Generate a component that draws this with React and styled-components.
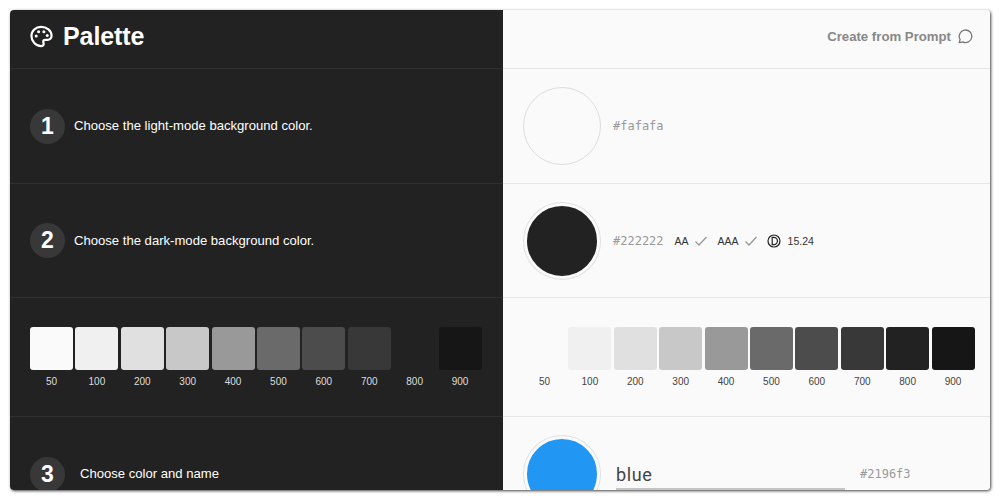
import React from "react";
import styled, { createGlobalStyle } from "styled-components";

const Global = createGlobalStyle`
  html, body { margin: 0; padding: 0; background: #fff; }
  body { font-family: "Liberation Sans", Arial, sans-serif; }
`;

const Page = styled.div`
  width: 1000px;
  height: 500px;
  padding: 10px;
  box-sizing: border-box;
  overflow: hidden;
`;

const Frame = styled.div`
  width: 980px;
  height: 480px;
  display: grid;
  grid-template-columns: 493px 487px;
  border-radius: 4px;
  overflow: hidden;
  box-shadow: 1px 1px 3px rgba(0, 0, 0, 0.75);
`;

const Panel = styled.section`
  display: grid;
  grid-template-columns: minmax(0, 1fr);
  grid-template-rows: 59px 115px 114px 119px 114px;
  background: ${(p) => (p.$dark ? "#222222" : "#fafafa")};
  color: ${(p) => (p.$dark ? "#ffffff" : "#222222")};
  --line: ${(p) => (p.$dark ? "#303030" : "#e6e6e6")};
`;

const Row = styled.div`
  display: flex;
  align-items: center;
  padding: 0 ${(p) => (p.$tight ? "15px" : "20px")} 0 20px;
  box-sizing: border-box;
  border-bottom: 1px solid var(--line);
  &:last-child { border-bottom: 0; }
`;

const HeaderRow = styled(Row)`
  justify-content: ${(p) => (p.$end ? "flex-end" : "flex-start")};
  gap: ${(p) => (p.$end ? "7px" : "10px")};
  padding-right: ${(p) => (p.$end ? "16px" : "20px")};
  padding-bottom: 6px;
`;

const Title = styled.h1`
  margin: 0;
  font-size: 25px;
  font-weight: 700;
  line-height: 30px;
  letter-spacing: -0.1px;
`;

const PromptLink = styled.span`
  font-size: 13.2px;
  font-weight: 700;
  color: #888888;
`;

const StepBadge = styled.span`
  width: 35px;
  height: 35px;
  border-radius: 50%;
  background: #383838;
  display: flex;
  align-items: center;
  justify-content: center;
  font-size: 23px;
  font-weight: 700;
  color: #fff;
  flex: none;
`;

const StepText = styled.span`
  font-size: 13.1px;
  margin-left: ${(p) => p.$gap || 9}px;
  margin-bottom: 1px;
  color: #fff;
`;

const Circle = styled.div`
  width: 78px;
  height: 78px;
  box-sizing: border-box;
  border-radius: 50%;
  flex: none;
  background: ${(p) => p.$color};
  border: ${(p) => (p.$ringed ? "3px solid #fafafa" : "1px solid #dddddd")};
  box-shadow: ${(p) => (p.$ringed ? "0 0 0 1px #e0e0e0" : "none")};
  ${(p) => p.$ringed && "width: 76px; height: 76px; margin: 0 1px;"}
`;

const Hex = styled.span`
  font-family: "DejaVu Sans Mono", monospace;
  font-size: 12px;
  color: #999999;
  margin-left: ${(p) => p.$gap ?? 12}px;
`;

const Grade = styled.span`
  font-size: 10.5px;
  color: #333;
  margin-left: ${(p) => p.$gap}px;
`;

const CheckIcon = styled.svg`
  width: 14px;
  height: 14px;
  margin-left: 5px;
  fill: none;
  stroke: #999999;
  stroke-width: 1.3;
`;

const ContrastIcon = styled.svg`
  width: 14px;
  height: 14px;
  margin-left: 9px;
  fill: none;
  stroke: #222;
  stroke-width: 1.2;
`;

const Swatches = styled.div`
  width: 100%;
  display: grid;
  grid-template-columns: repeat(10, 43px);
  column-gap: 2.4px;
`;

const SwatchCell = styled.div`
  display: flex;
  flex-direction: column;
  align-items: center;
  gap: 6px;
`;

const Swatch = styled.div`
  width: 43px;
  height: 43px;
  border-radius: 3px;
  background: ${(p) => p.$color};
`;

const SwatchLabel = styled.span`
  font-size: 10px;
  line-height: 12px;
  color: ${(p) => (p.$dark ? "#dddddd" : "#444444")};
`;

const NameField = styled.div`
  position: relative;
  width: 229px;
  height: 28px;
  margin-left: 15px;
  display: flex;
  align-items: center;
  font-family: Roboto, sans-serif;
  font-size: 18px;
  letter-spacing: 0.6px;
  color: #444444;
  flex: none;
`;

const Underline = styled.span`
  position: absolute;
  left: 0;
  right: 0;
  top: 28px;
  height: 2px;
  background: #c4c4c4;
`;

const greys = ["#fafafa", "#f0f0f0", "#e0e0e0", "#c8c8c8", "#999999", "#6a6a6a", "#4c4c4c", "#383838", "#222222", "#161616"];
const labels = [50, 100, 200, 300, 400, 500, 600, 700, 800, 900];

const PaletteIcon = () => (
  <svg width="23" height="23" viewBox="0 0 24 24" fill="none" stroke="#fff" strokeWidth="2.3" strokeLinecap="round" strokeLinejoin="round">
    <path d="M11.5 2C6 2 1.5 6 1.5 11.5 1.5 17 6 22 11.5 22c1.8 0 2.8-1 2.8-2.4 0-.8-.5-1.4-.5-2.1 0-1.2 1-2 2.2-2h2.2c2.4 0 4.3-1.8 4.3-4.2C22.5 6 17.5 2 11.5 2z" />
    <circle cx="6.5" cy="11.5" r="1.6" fill="#fff" stroke="none" />
    <circle cx="9" cy="7" r="1.6" fill="#fff" stroke="none" />
    <circle cx="14.5" cy="7" r="1.6" fill="#fff" stroke="none" />
    <circle cx="18" cy="11" r="1.6" fill="#fff" stroke="none" />
  </svg>
);

const BubbleIcon = () => (
  <svg width="16" height="16" viewBox="0 0 16 16" fill="none" stroke="#777" strokeWidth="1.3" strokeLinejoin="round">
    <path d="M1.2 14.6l.9-3.1A6.3 6.3 0 1 1 4.6 13.9c-1.1.5-2.2.7-3.4.7z" />
  </svg>
);

const Check = () => (
  <CheckIcon viewBox="0 0 14 14"><path d="M1.5 7.5l3.5 3.5 7.5-8" /></CheckIcon>
);

const Scale = ({ dark, colors }) => (
  <Swatches>
    {labels.map((l, i) => (
      <SwatchCell key={l}>
        <Swatch $color={colors[i]} />
        <SwatchLabel $dark={dark}>{l}</SwatchLabel>
      </SwatchCell>
    ))}
  </Swatches>
);

export default function App() {
  return (
    <Page>
      <Global />
      <Frame>
        <Panel $dark>
          <HeaderRow>
            <PaletteIcon />
            <Title>Palette</Title>
          </HeaderRow>
          <Row>
            <StepBadge>1</StepBadge>
            <StepText>Choose the light-mode background color.</StepText>
          </Row>
          <Row>
            <StepBadge>2</StepBadge>
            <StepText>Choose the dark-mode background color.</StepText>
          </Row>
          <Row>
            <Scale dark colors={greys} />
          </Row>
          <Row>
            <StepBadge>3</StepBadge>
            <StepText $gap={15}>Choose color and name</StepText>
          </Row>
        </Panel>
        <Panel>
          <HeaderRow $end>
            <PromptLink>Create from Prompt</PromptLink>
            <BubbleIcon />
          </HeaderRow>
          <Row>
            <Circle $color="#fafafa" />
            <Hex>#fafafa</Hex>
          </Row>
          <Row>
            <Circle $color="#222222" $ringed />
            <Hex>#222222</Hex>
            <Grade $gap={11}>AA</Grade>
            <Check />
            <Grade $gap={10}>AAA</Grade>
            <Check />
            <ContrastIcon viewBox="0 0 14 14">
              <circle cx="7" cy="7" r="6" />
              <path d="M5.2 3.4h1.6a3.6 3.6 0 0 1 0 7.2H5.2z" />
            </ContrastIcon>
            <Grade $gap={7}>15.24</Grade>
          </Row>
          <Row $tight>
            <Scale colors={greys} />
          </Row>
          <Row>
            <Circle $color="#2196f3" $ringed />
            <NameField>
              blue
              <Underline />
            </NameField>
            <Hex $gap={15}>#2196f3</Hex>
          </Row>
        </Panel>
      </Frame>
    </Page>
  );
}
